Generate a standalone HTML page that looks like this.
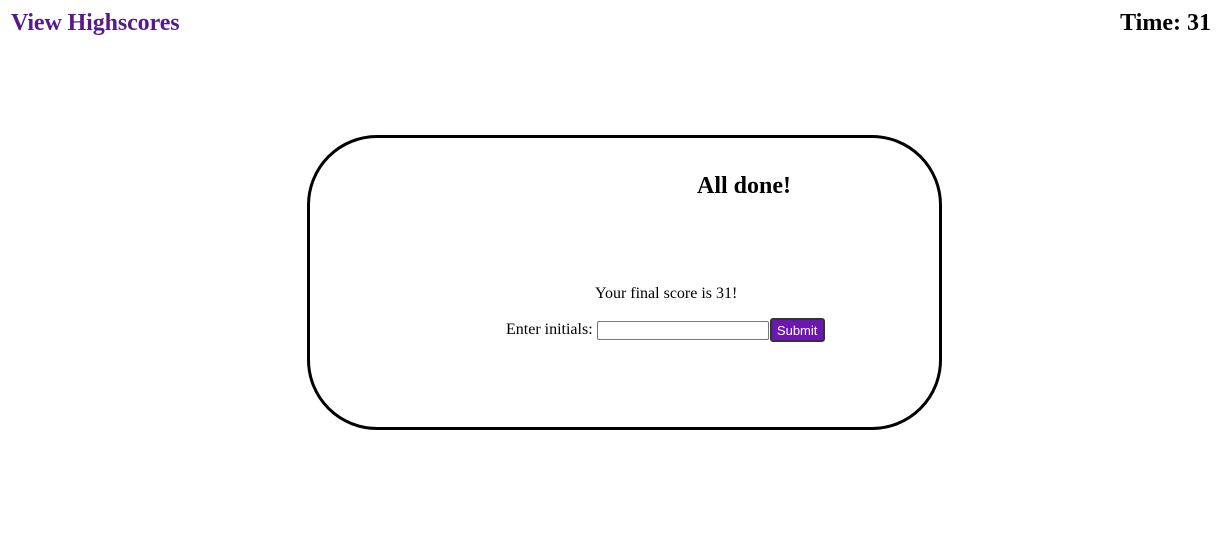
<!DOCTYPE html>
<html><head><style>
body{margin:0;width:1222px;height:538px;background:#fff;font-family:"Liberation Serif",serif;position:relative;overflow:hidden}
.hs{position:absolute;left:11px;top:10px;font-size:24px;font-weight:bold;color:#551a8b;letter-spacing:-0.1px}
.time{position:absolute;right:11px;top:10px;font-size:24px;font-weight:bold;color:#000}
.card{position:absolute;left:307px;top:135px;width:629px;height:289px;border:3px solid #000;border-radius:70px}
h2{position:absolute;left:697px;top:173px;margin:0;font-size:24px;font-weight:bold}
.score{position:absolute;left:595px;top:285px;font-size:16px}
.row{position:absolute;left:506px;top:318px;font-size:16px;display:flex;align-items:center}
input{width:170px;height:17px;border:1px solid #767676;border-radius:2px;margin:0 0 0 4px;padding:0}
button{background:#6c17b3;color:#fff;font-family:"Liberation Sans",sans-serif;font-size:13px;border:2px solid #333;border-radius:3px;height:24px;width:55px;padding:0;margin-left:1px}
</style></head><body>
<div class="hs">View Highscores</div>
<div class="time">Time: 31</div>
<div class="card"></div>
<h2>All done!</h2>
<div class="score">Your final score is 31!</div>
<div class="row">Enter initials: <input type="text"><button>Submit</button></div>
</body></html>
